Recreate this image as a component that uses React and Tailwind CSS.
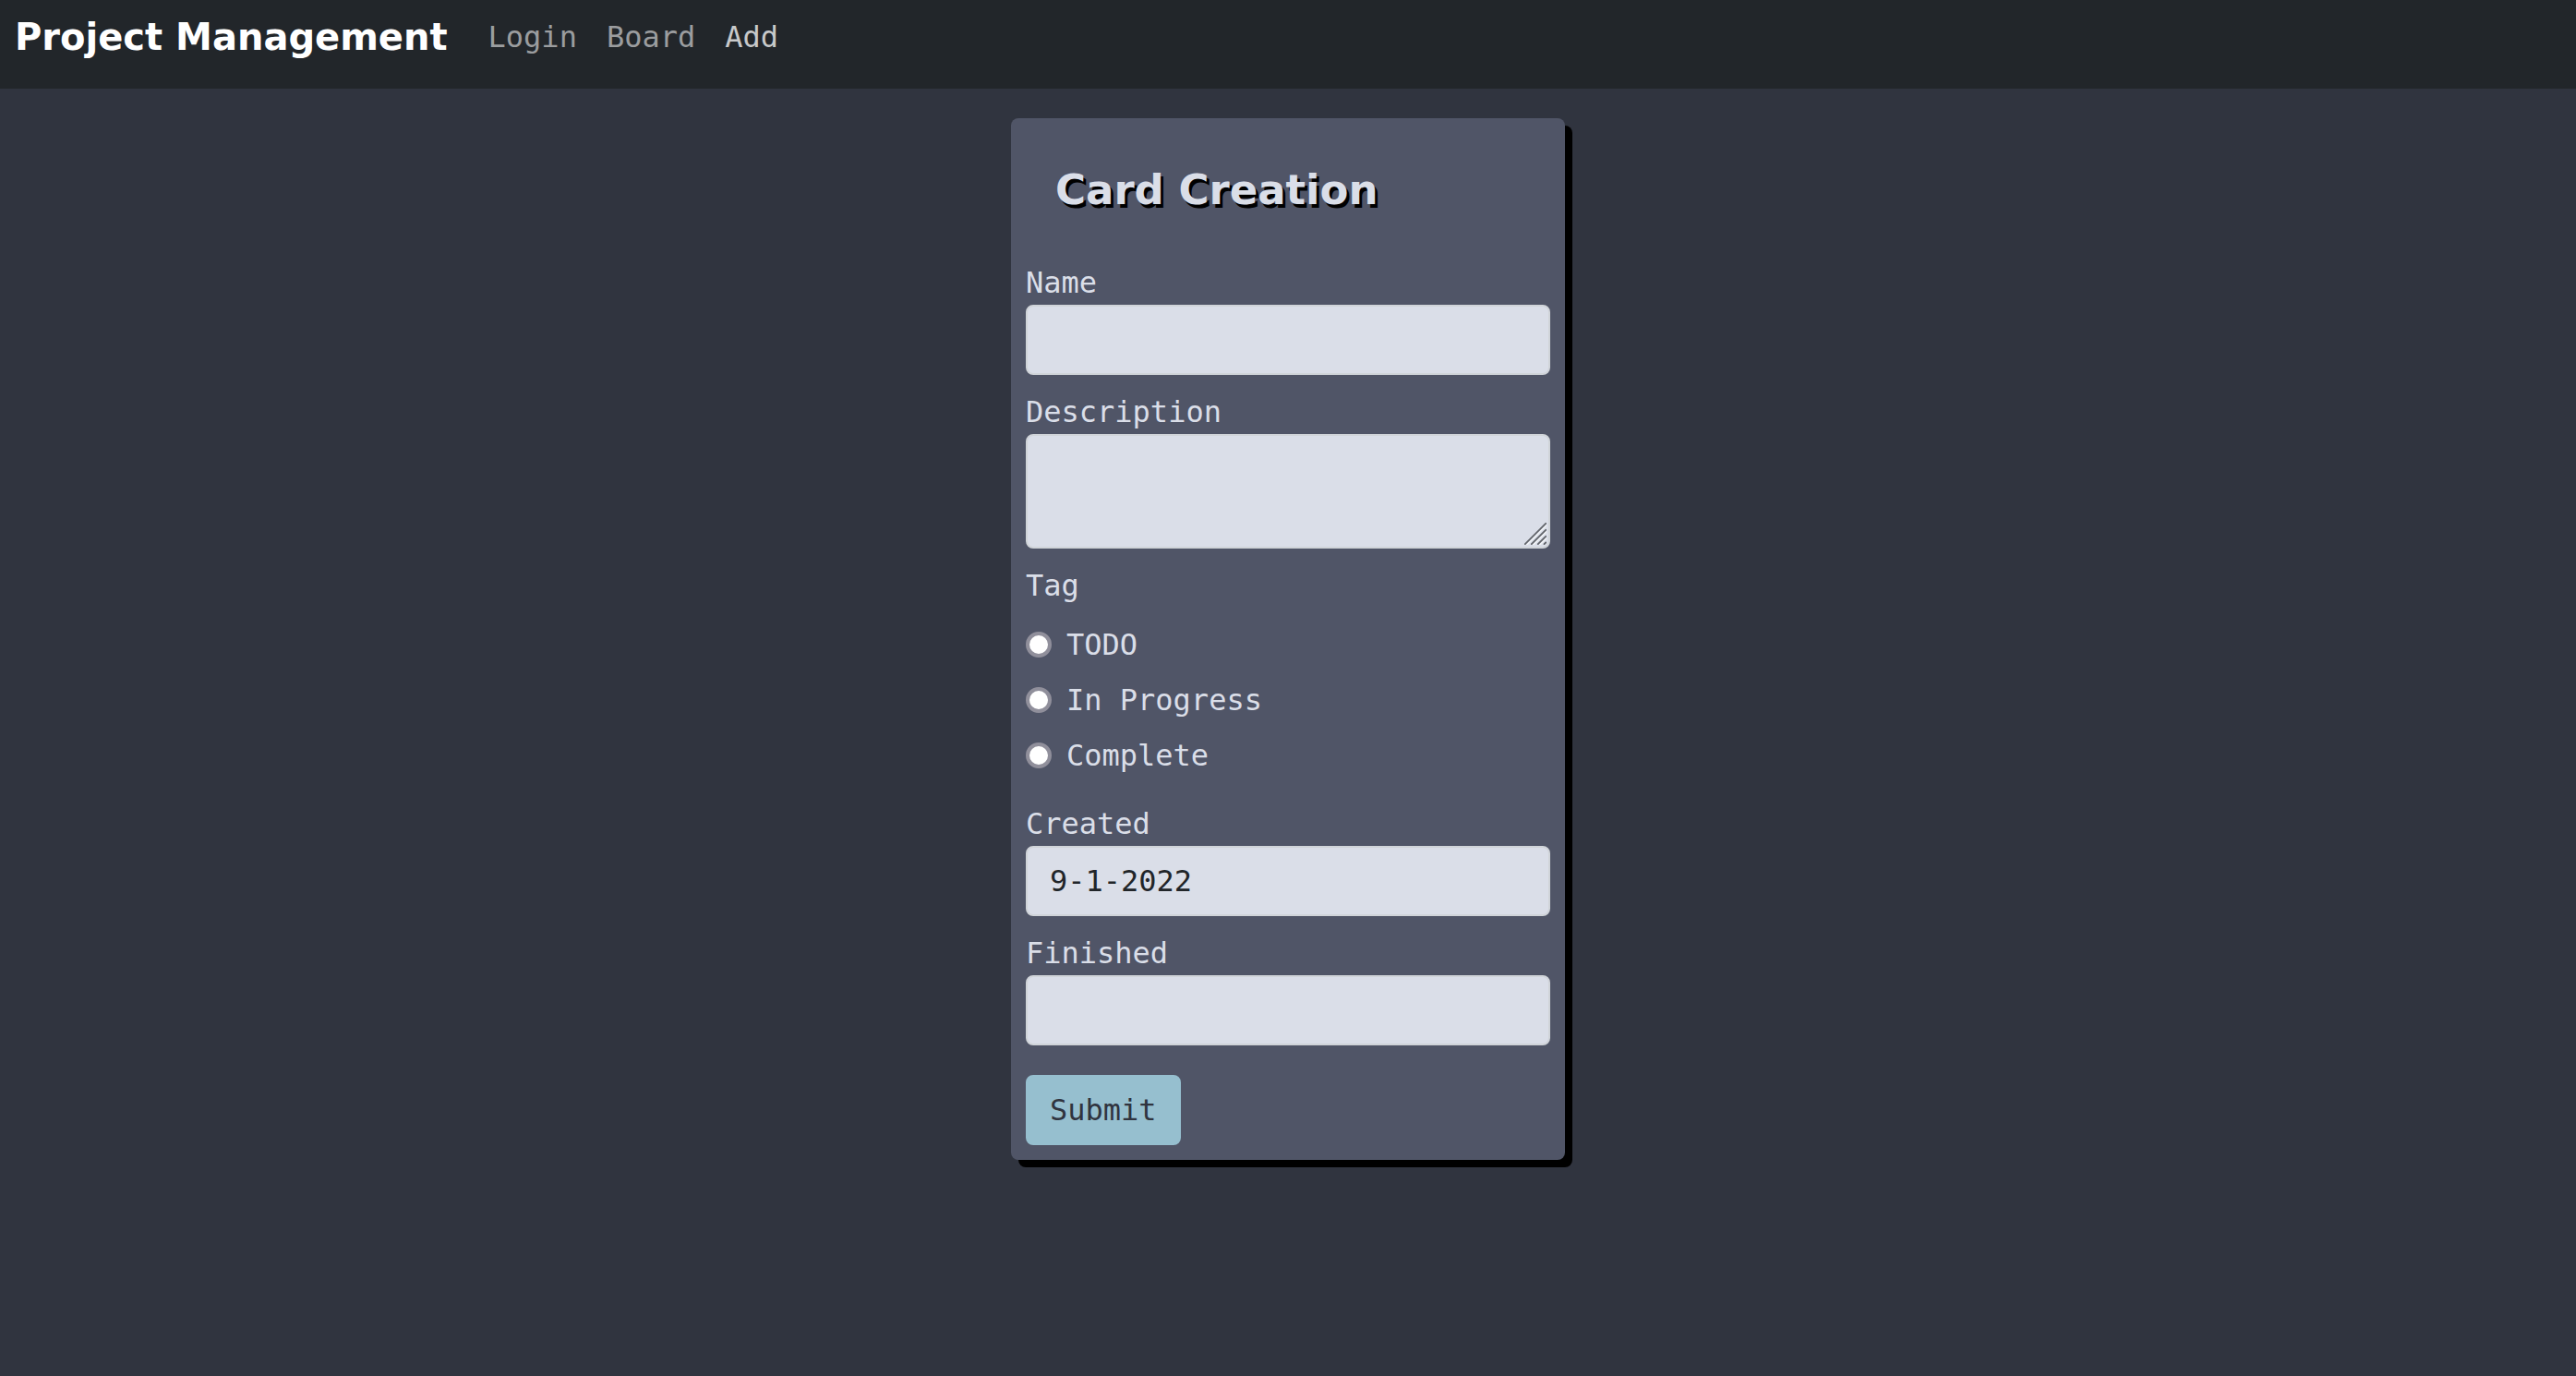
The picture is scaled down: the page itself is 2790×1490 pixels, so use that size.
const control =
  "block w-full rounded-lg border-2 border-[#d0d4d9] bg-[#dadee8] px-6 py-3 leading-[48px] text-[#212529] outline-none";

function Field({ id, label, children }) {
  return (
    <div className="mb-4">
      <label htmlFor={id} className="block">
        {label}
      </label>
      {children}
    </div>
  );
}

function TextField({ id, label, defaultValue }) {
  return (
    <Field id={id} label={label}>
      <input
        id={id}
        name={id}
        type="text"
        defaultValue={defaultValue}
        className={`${control} h-[76px]`}
      />
    </Field>
  );
}

function ResizeGrip() {
  return (
    <svg
      viewBox="0 0 24 24"
      fill="none"
      strokeLinecap="round"
      strokeWidth="1.8"
      aria-hidden="true"
      className="pointer-events-none absolute right-1 bottom-1 size-6"
    >
      <path
        d="M2.5 24 24 2.5M9.5 24 24 9.5M16.5 24 24 16.5"
        stroke="#f0f2f6"
      />
      <path
        d="M.8 23.2 23.2.8M7.8 23.2 23.2 7.8M14.8 23.2l8.4-8.4M21.5 23.2l1.7-1.7"
        stroke="#62656b"
      />
    </svg>
  );
}

const tags = ["TODO", "In Progress", "Complete"];

const links = [
  { label: "Login", active: false },
  { label: "Board", active: false },
  { label: "Add", active: true },
];

export default function App() {
  return (
    <div className="min-h-screen bg-[#30343f] font-['DejaVu_Sans_Mono',monospace] text-[32px] leading-[48px] text-[#dadee8]">
      <nav className="flex items-center bg-[#22262a] px-4 pt-4 pb-8">
        <a
          href="#home"
          className="mr-11 font-['DejaVu_Sans',sans-serif] text-[40px] leading-[48px] font-bold text-white"
        >
          Project Management
        </a>
        <ul className="flex gap-8">
          {links.map(({ label, active }) => (
            <li key={label}>
              <a
                href={`#${label.toLowerCase()}`}
                className={active ? "text-[#c8c9ca]" : "text-[#9b9d9f]"}
              >
                {label}
              </a>
            </li>
          ))}
        </ul>
      </nav>

      <main className="px-4 py-8">
        <form
          onSubmit={(e) => e.preventDefault()}
          className="mx-auto w-full max-w-[600px] rounded-lg bg-[#505567] p-4 shadow-[8px_8px_0_#000]"
        >
          <h1 className="mb-[14px] p-8 font-['DejaVu_Sans',sans-serif] text-[45px] leading-[60px] font-bold [text-shadow:3px_4px_0_#000]">
            Card Creation
          </h1>

          <TextField id="name" label="Name" />

          <Field id="description" label="Description">
            <div className="relative">
              <textarea
                id="description"
                name="description"
                rows={2}
                className={`${control} h-[124px] resize-none`}
              />
              <ResizeGrip />
            </div>
          </Field>

          <fieldset className="mb-[26px]">
            <legend className="mb-4">Tag</legend>
            <div className="flex flex-col gap-3">
              {tags.map((tag) => (
                <label key={tag} className="flex items-center gap-4">
                  <input
                    type="radio"
                    name="tag"
                    value={tag}
                    className="size-7 appearance-none rounded-full border-4 border-[#908f9b] bg-white checked:bg-[#96bfcf]"
                  />
                  {tag}
                </label>
              ))}
            </div>
          </fieldset>

          <TextField id="created" label="Created" defaultValue="9-1-2022" />
          <TextField id="finished" label="Finished" />

          <button
            type="submit"
            className="mt-8 block rounded-lg border-2 border-[#96bfcf] bg-[#96bfcf] px-6 py-3 text-[#30343f]"
          >
            Submit
          </button>
        </form>
      </main>
    </div>
  );
}
